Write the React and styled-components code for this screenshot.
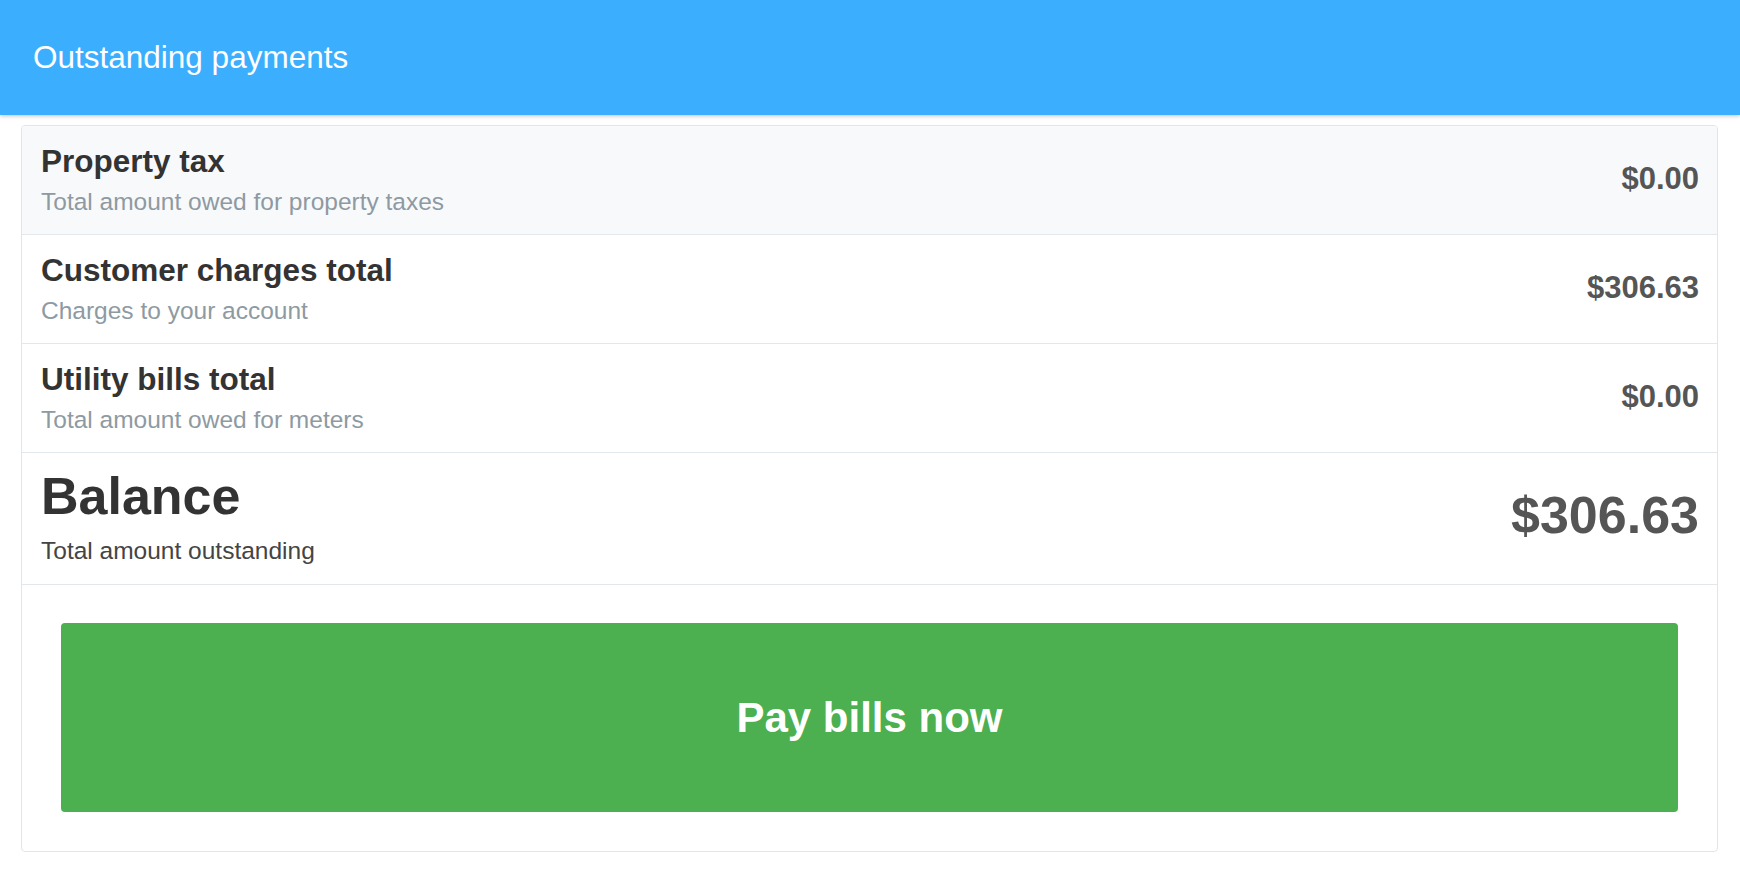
import React from 'react'
import styled, { createGlobalStyle } from 'styled-components'

const GlobalStyle = createGlobalStyle`
  body {
    margin: 0;
    background: #fff;
    font-family: "Liberation Sans", Arial, Helvetica, sans-serif;
  }
`

const Header = styled.header`
  height: 115px;
  background: #3caefe;
  box-shadow: 0 1px 4px rgba(0, 0, 0, 0.25);
  display: flex;
  align-items: center;
  padding: 0 0 2px 33px;
  box-sizing: border-box;
`

const HeaderTitle = styled.h1`
  margin: 0;
  color: #fff;
  font-size: 31.5px;
  line-height: 36px;
  font-weight: 400;
`

const Card = styled.section`
  margin: 10px 22px 0 21px;
  border: 1px solid #e1e6ea;
  border-radius: 4px;
  overflow: hidden;
`

const Row = styled.div`
  display: flex;
  align-items: center;
  justify-content: space-between;
  padding: ${p => (p.$big ? '16px 18px 17px 19px' : '16px 18px 16px 19px')};
  background: ${p => (p.$shaded ? '#f8f9fb' : '#fff')};
  border-bottom: 1px solid #e3e8ec;
`

const Info = styled.div`
  display: flex;
  flex-direction: column;
`

const Title = styled.div`
  color: #333;
  font-weight: 700;
  font-size: ${p => (p.$big ? '52px' : '31.5px')};
  line-height: ${p => (p.$big ? '54px' : '38px')};
`

const Subtitle = styled.div`
  color: ${p => (p.$dark ? '#444' : '#8e9aa2')};
  font-size: 24.5px;
  line-height: 32px;
  margin-top: ${p => (p.$big ? '12px' : '6px')};
`

const Amount = styled.div`
  color: #555;
  font-weight: 700;
  font-size: ${p => (p.$big ? '52px' : '31px')};
  line-height: ${p => (p.$big ? '60px' : '38px')};
  margin-bottom: ${p => (p.$big ? '6px' : '3px')};
`

const Footer = styled.div`
  padding: 38px 39px 39px 39px;
`

const PayButton = styled.button`
  display: flex;
  align-items: center;
  justify-content: center;
  width: 100%;
  height: 189px;
  border: none;
  border-radius: 4px;
  background: #4caf50;
  color: #fff;
  font-family: inherit;
  font-weight: 700;
  font-size: 42px;
  cursor: pointer;
`

const items = [
  { title: 'Property tax', sub: 'Total amount owed for property taxes', amount: '$0.00', shaded: true },
  { title: 'Customer charges total', sub: 'Charges to your account', amount: '$306.63' },
  { title: 'Utility bills total', sub: 'Total amount owed for meters', amount: '$0.00' },
]

export default function App() {
  return (
    <>
      <GlobalStyle />
      <Header>
        <HeaderTitle>Outstanding payments</HeaderTitle>
      </Header>
      <Card>
        {items.map(item => (
          <Row key={item.title} $shaded={item.shaded}>
            <Info>
              <Title>{item.title}</Title>
              <Subtitle>{item.sub}</Subtitle>
            </Info>
            <Amount>{item.amount}</Amount>
          </Row>
        ))}
        <Row $big>
          <Info>
            <Title $big>Balance</Title>
            <Subtitle $big $dark>Total amount outstanding</Subtitle>
          </Info>
          <Amount $big>$306.63</Amount>
        </Row>
        <Footer>
          <PayButton>Pay bills now</PayButton>
        </Footer>
      </Card>
    </>
  )
}
